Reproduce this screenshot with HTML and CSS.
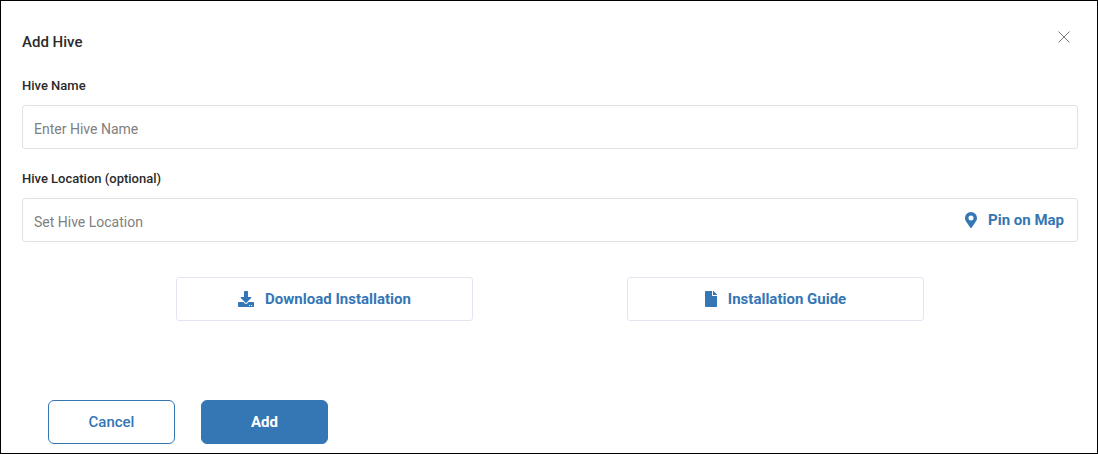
FILE: index.html
```html
<!DOCTYPE html>
<html lang="en">
<head>
    <meta charset="UTF-8">
    <meta name="viewport" content="width=device-width, initial-scale=1.0">
    <title>Add Hive</title>
    <link rel="stylesheet" href="styles.css">
</head>
<body>
    <form class="modal">
        <div class="modal-header">
            <h1>Add Hive</h1>
            <button type="button" class="close-btn" aria-label="Close">
                <svg width="12" height="12" viewBox="0 0 12 12">
                    <path d="M.5 .5l11 11M11.5 .5L.5 11.5" fill="none" stroke="currentColor" stroke-width="1"/>
                </svg>
            </button>
        </div>

        <div class="form-group">
            <label for="hive-name">Hive Name</label>
            <div class="input-box">
                <input type="text" id="hive-name" placeholder="Enter Hive Name">
            </div>
        </div>

        <div class="form-group">
            <label for="hive-location">Hive Location (optional)</label>
            <div class="input-box">
                <input type="text" id="hive-location" placeholder="Set Hive Location">
                <button type="button" class="pin-btn">
                    <svg width="12" height="16" viewBox="0 0 384 512" fill="currentColor">
                        <path d="M172 502C27 291 0 270 0 192a192 192 0 0 1 384 0c0 78-27 99-172 310a24 24 0 0 1-40 0zM192 272a80 80 0 1 0 0-160 80 80 0 0 0 0 160z"/>
                    </svg>
                    Pin on Map
                </button>
            </div>
        </div>

        <div class="links">
            <button type="button" class="link-btn">
                <svg width="16" height="16" viewBox="0 0 512 512" fill="currentColor">
                    <path d="M216 0h80c13 0 24 11 24 24v168h88c18 0 27 21 14 34L270 378c-8 8-20 8-28 0L90 226c-13-13-4-34 14-34h88V24c0-13 11-24 24-24zm296 376v112c0 13-11 24-24 24H24c-13 0-24-11-24-24V376c0-13 11-24 24-24h147l49 49c20 20 52 20 72 0l49-49h147c13 0 24 11 24 24zM388 464a20 20 0 1 0-40 0 20 20 0 0 0 40 0zm64 0a20 20 0 1 0-40 0 20 20 0 0 0 40 0z"/>
                </svg>
                Download Installation
            </button>
            <button type="button" class="link-btn">
                <svg width="12" height="16" viewBox="0 0 384 512" fill="currentColor">
                    <path d="M224 136V0H24C11 0 0 11 0 24v464c0 13 11 24 24 24h336c13 0 24-11 24-24V160H248c-13 0-24-11-24-24zm160-14v6H256V0h6c6 0 12 3 17 7l98 98c4 5 7 11 7 17z"/>
                </svg>
                Installation Guide
            </button>
        </div>

        <div class="modal-footer">
            <button type="button" class="btn btn-outline">Cancel</button>
            <button type="submit" class="btn btn-primary">Add</button>
        </div>
    </form>
</body>
</html>
```
FILE: styles.css
```css
* {
    box-sizing: border-box;
}

body {
    margin: 0;
    font-family: Roboto, sans-serif;
    background-color: #fff;
    color: #2b2b2b;
}

.modal {
    min-height: 100vh;
    padding: 23px 19px 9px 21px;
    border: 1px solid #000;
}

button {
    font-family: inherit;
    cursor: pointer;
}

.modal-header {
    display: flex;
    align-items: flex-start;
    justify-content: space-between;
    margin-bottom: 24px;
}

h1 {
    margin: 0;
    padding-top: 8px;
    font-size: 15px;
    font-weight: 500;
    line-height: 20px;
}

.close-btn {
    display: flex;
    padding: 7px 8px;
    border: none;
    background: none;
    color: #777;
}

.form-group {
    margin-bottom: 20px;
}

label {
    display: block;
    margin-bottom: 9px;
    font-size: 13px;
    font-weight: 500;
    line-height: 20px;
}

.input-box {
    display: flex;
    height: 44px;
    border: 1px solid #e2e2e2;
    border-radius: 3px;
}

.input-box input {
    flex: 1;
    min-width: 0;
    padding: 4px 11px 0;
    border: none;
    outline: none;
    background: none;
    font-family: inherit;
    font-size: 14px;
}

.input-box input::placeholder {
    color: #808080;
}

.pin-btn,
.link-btn {
    display: flex;
    align-items: center;
    justify-content: center;
    gap: 11px;
    background: none;
    color: #3576b5;
    font-size: 15px;
    font-weight: 700;
}

.pin-btn {
    border: none;
    padding: 0 13px;
}

.links {
    display: flex;
    justify-content: space-evenly;
    margin-top: 35px;
}

.link-btn {
    width: 297px;
    height: 44px;
    border: 1px solid #e4e4f0;
    border-radius: 3px;
}

.modal-footer {
    display: flex;
    gap: 26px;
    margin-top: 79px;
    padding: 0 26px;
}

.btn {
    width: 127px;
    height: 44px;
    border: 1px solid #3576b5;
    border-radius: 6px;
    font-size: 15px;
}

.btn-outline {
    background-color: #fff;
    color: #3576b5;
    font-weight: 500;
}

.btn-primary {
    background-color: #3576b5;
    color: #fff;
    font-weight: 700;
}
```
